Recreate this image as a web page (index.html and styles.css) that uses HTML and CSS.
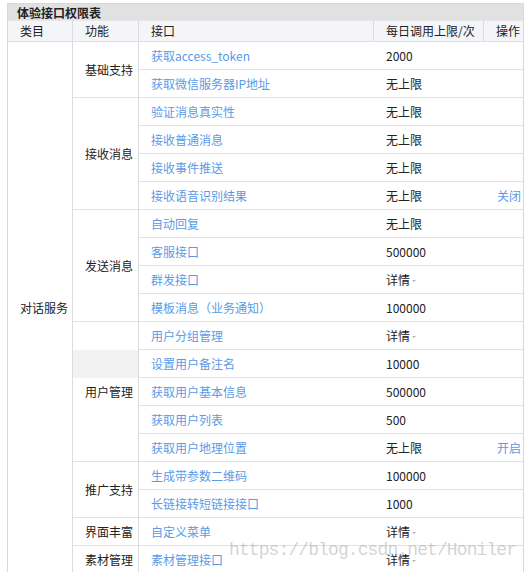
FILE: index.html
```html
<!DOCTYPE html>
<html lang="zh-CN">
<head>
<meta charset="utf-8">
<title>体验接口权限表</title>
<link rel="stylesheet" href="styles.css">
</head>
<body>
<div class="panel">
  <div class="panel-title">体验接口权限表</div>
  <table class="api-table">
    <thead>
      <tr class="head-row">
        <th class="c1">类目</th>
        <th class="c2">功能</th>
        <th class="c3">接口</th>
        <th class="c4">每日调用上限/次</th>
        <th class="c5">操作</th>
      </tr>
    </thead>
    <tbody>
      <tr>
        <td class="cat" rowspan="19">对话服务</td>
        <td class="func" rowspan="2">基础支持</td>
        <td class="api"><a>获取access_token</a></td>
        <td class="limit">2000</td>
        <td class="op"></td>
      </tr>
      <tr>
        <td class="api"><a>获取微信服务器IP地址</a></td>
        <td class="limit">无上限</td>
        <td class="op"></td>
      </tr>
      <tr>
        <td class="func" rowspan="4">接收消息</td>
        <td class="api"><a>验证消息真实性</a></td>
        <td class="limit">无上限</td>
        <td class="op"></td>
      </tr>
      <tr>
        <td class="api"><a>接收普通消息</a></td>
        <td class="limit">无上限</td>
        <td class="op"></td>
      </tr>
      <tr>
        <td class="api"><a>接收事件推送</a></td>
        <td class="limit">无上限</td>
        <td class="op"></td>
      </tr>
      <tr>
        <td class="api"><a>接收语音识别结果</a></td>
        <td class="limit">无上限</td>
        <td class="op"><a>关闭</a></td>
      </tr>
      <tr>
        <td class="func" rowspan="4">发送消息</td>
        <td class="api"><a>自动回复</a></td>
        <td class="limit">无上限</td>
        <td class="op"></td>
      </tr>
      <tr>
        <td class="api"><a>客服接口</a></td>
        <td class="limit">500000</td>
        <td class="op"></td>
      </tr>
      <tr>
        <td class="api"><a>群发接口</a></td>
        <td class="limit"><span class="detail">详情</span></td>
        <td class="op"></td>
      </tr>
      <tr>
        <td class="api"><a>模板消息（业务通知）</a></td>
        <td class="limit">100000</td>
        <td class="op"></td>
      </tr>
      <tr>
        <td class="func func-stripe" rowspan="5">用户管理</td>
        <td class="api"><a>用户分组管理</a></td>
        <td class="limit"><span class="detail">详情</span></td>
        <td class="op"></td>
      </tr>
      <tr>
        <td class="api"><a>设置用户备注名</a></td>
        <td class="limit">10000</td>
        <td class="op"></td>
      </tr>
      <tr>
        <td class="api"><a>获取用户基本信息</a></td>
        <td class="limit">500000</td>
        <td class="op"></td>
      </tr>
      <tr>
        <td class="api"><a>获取用户列表</a></td>
        <td class="limit">500</td>
        <td class="op"></td>
      </tr>
      <tr>
        <td class="api"><a>获取用户地理位置</a></td>
        <td class="limit">无上限</td>
        <td class="op"><a>开启</a></td>
      </tr>
      <tr>
        <td class="func" rowspan="2">推广支持</td>
        <td class="api"><a>生成带参数二维码</a></td>
        <td class="limit">100000</td>
        <td class="op"></td>
      </tr>
      <tr>
        <td class="api"><a>长链接转短链接接口</a></td>
        <td class="limit">1000</td>
        <td class="op"></td>
      </tr>
      <tr>
        <td class="func">界面丰富</td>
        <td class="api"><a>自定义菜单</a></td>
        <td class="limit"><span class="detail">详情</span></td>
        <td class="op"></td>
      </tr>
      <tr>
        <td class="func">素材管理</td>
        <td class="api"><a>素材管理接口</a></td>
        <td class="limit"><span class="detail">详情</span></td>
        <td class="op"></td>
      </tr>
    </tbody>
  </table>
</div>
<div class="watermark">https://blog.csdn.net/Honiler</div>
</body>
</html>
```

FILE: styles.css
```css
html, body {
  margin: 0;
  background: #ffffff;
}

body {
  padding: 3px 0 0 7px;
  font-family: "Noto Sans CJK SC", "Noto Sans", sans-serif;
  font-size: 12px;
  color: #222222;
  position: relative;
  min-height: 569px;
  overflow: hidden;
}

.panel {
  width: 517px;
  box-sizing: border-box;
  border: 1px solid #d8d8d8;
  border-bottom: none;
}

.panel-title {
  height: 16px;
  line-height: 18px;
  background: #e1e1e1;
  font-weight: bold;
  padding-left: 9px;
  color: #222;
}

.api-table {
  width: 515px;
  table-layout: fixed;
  border-collapse: separate;
  border-spacing: 0;
}

.api-table th,
.api-table td {
  box-sizing: border-box;
  padding: 0 0 0 12px;
  text-align: left;
  vertical-align: middle;
  font-weight: normal;
  white-space: nowrap;
  overflow: hidden;
  line-height: 16px;
}

.head-row {
  height: 22px;
  background: #f4f5f9;
}

.head-row th {
  border-top: 1px solid #e8e8e8;
  border-bottom: 1px solid #e0e0e0;
  border-right: 1px solid #dcdcdc;
}

.head-row th.c5 {
  border-right: none;
  padding-left: 12px;
}

.c1 { width: 65px; }
.c2 { width: 66px; }
.c3 { width: 235px; }
.c4 { width: 110px; }
.c5 { width: 39px; }

.api-table tbody tr {
  height: 28px;
}

.cat {
  border-right: 1px solid #dcdcdc;
}

.func {
  border-right: 1px solid #dcdcdc;
  border-bottom: 1px solid #e2e2e2;
}

.func-stripe {
  background: linear-gradient(to bottom,
    #ffffff 0, #ffffff 28px,
    #f2f2f2 28px, #f2f2f2 56px,
    #ffffff 56px);
}

.api,
.limit,
.op {
  border-bottom: 1px solid #e2e2e2;
}

.op {
  padding-left: 13px !important;
}

.api a,
.op a {
  color: #5a9be6;
  text-decoration: none;
}

.detail::after {
  content: "";
  display: inline-block;
  vertical-align: middle;
  margin-left: 2px;
  border-left: 2px solid transparent;
  border-right: 2px solid transparent;
  border-top: 2px solid #b5b5b5;
}

.watermark {
  position: absolute;
  left: 229px;
  top: 540px;
  font-family: "Liberation Mono", "DejaVu Sans Mono", monospace;
  font-size: 18px;
  letter-spacing: -0.9px;
  line-height: 20px;
  color: rgba(150, 150, 150, 0.42);
  pointer-events: none;
}
```
